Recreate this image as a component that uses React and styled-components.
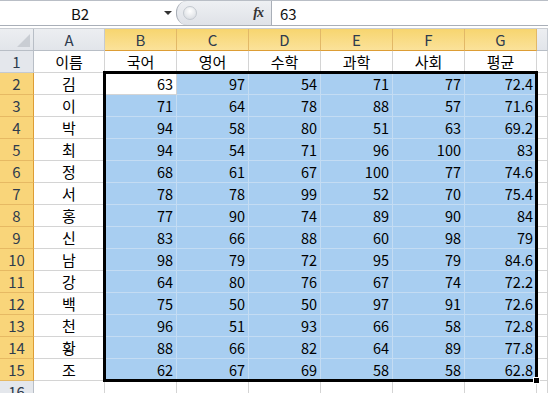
import styled, { createGlobalStyle } from "styled-components";

const GlobalStyle = createGlobalStyle`
  html, body {
    margin: 0;
    padding: 0;
    background: #ffffff;
    overflow: hidden;
  }
  body {
    font-family: "Noto Sans CJK KR", "Noto Sans", sans-serif;
  }
`;

const COLS = ["A", "B", "C", "D", "E", "F", "G"];

const rows = [
  ["이름", "국어", "영어", "수학", "과학", "사회", "평균"],
  ["김", 63, 97, 54, 71, 77, 72.4],
  ["이", 71, 64, 78, 88, 57, 71.6],
  ["박", 94, 58, 80, 51, 63, 69.2],
  ["최", 94, 54, 71, 96, 100, 83],
  ["정", 68, 61, 67, 100, 77, 74.6],
  ["서", 78, 78, 99, 52, 70, 75.4],
  ["홍", 77, 90, 74, 89, 90, 84],
  ["신", 83, 66, 88, 60, 98, 79],
  ["남", 98, 79, 72, 95, 79, 84.6],
  ["강", 64, 80, 76, 67, 74, 72.2],
  ["백", 75, 50, 50, 97, 91, 72.6],
  ["천", 96, 51, 93, 66, 58, 72.8],
  ["황", 88, 66, 82, 64, 89, 77.8],
  ["조", 62, 67, 69, 58, 58, 62.8],
];

const Window = styled.div`
  width: 548px;
  height: 393px;
  overflow: hidden;
  background: #ffffff;
  font-size: 14px;
`;

const FormulaBar = styled.div`
  display: flex;
  height: 24px;
  border-top: 1px solid #b9bec6;
  border-bottom: 1px solid #a9afb8;
  font-size: 15px;
`;

const NameBox = styled.div`
  position: relative;
  width: 176px;
  display: flex;
  align-items: center;
  justify-content: center;
  padding-right: 16px;
  box-sizing: border-box;
  background: #ffffff;
  color: #111;
`;

const DropArrow = styled.span`
  position: absolute;
  right: 4px;
  top: 10px;
  width: 0;
  height: 0;
  border-left: 4px solid transparent;
  border-right: 4px solid transparent;
  border-top: 4px solid #333;
`;

const Splitter = styled.div`
  width: 96px;
  display: flex;
  align-items: center;
  justify-content: space-between;
  padding: 0 8px 0 6px;
  box-sizing: border-box;
  background: linear-gradient(#eef0f3, #dfe2e7);
  border-left: 1px solid #a9afb8;
  border-right: 1px solid #a9afb8;
  border-radius: 11px 0 0 11px;
`;

const Knob = styled.span`
  width: 12px;
  height: 12px;
  border-radius: 50%;
  background: radial-gradient(circle at 50% 35%, #ffffff, #d3d7dd);
  border: 1px solid #c3c8cf;
`;

const Fx = styled.span`
  font-family: "Liberation Serif", serif;
  font-style: italic;
  font-weight: bold;
  font-size: 14px;
  color: #333;
  letter-spacing: -1px;
`;

const FormulaInput = styled.div`
  flex: 1;
  display: flex;
  align-items: center;
  padding-left: 8px;
  background: #ffffff;
  color: #111;
`;

const Spacer = styled.div`
  height: 2px;
  border-bottom: 1px solid #c9cdd3;
`;

const Sheet = styled.div`
  position: relative;
  display: grid;
  grid-template-columns: 34px 71px repeat(6, 72px) 1fr;
  grid-template-rows: 22px repeat(16, 22px);
`;

const Corner = styled.div`
  position: relative;
  background: linear-gradient(#eceef1, #e2e5ea);
  border-right: 1px solid #b8bec6;
  border-bottom: 1px solid #b8bec6;
  &::after {
    content: "";
    position: absolute;
    right: 3px;
    bottom: 3px;
    border-left: 13px solid transparent;
    border-bottom: 13px solid #c9cdd3;
  }
`;

const ColHead = styled.div`
  display: flex;
  align-items: center;
  justify-content: center;
  font-size: 15px;
  color: #2e3b4d;
  background: ${(p) =>
    p.$active
      ? "linear-gradient(#f7d56f, #fbe29a)"
      : "linear-gradient(#eceef1, #e2e5ea)"};
  border-right: 1px solid ${(p) => (p.$active ? "#e2b867" : "#c5cad1")};
  border-bottom: 1px solid ${(p) => (p.$active ? "#dd9d35" : "#b8bec6")};
`;

const RowHead = styled.div`
  display: flex;
  align-items: center;
  justify-content: center;
  font-size: 15px;
  color: #2e3b4d;
  background: ${(p) => (p.$active ? "#f9d57a" : "#e4e7ec")};
  border-right: 1px solid ${(p) => (p.$active ? "#dd9d35" : "#b8bec6")};
  border-bottom: 1px solid ${(p) => (p.$active ? "#e6b963" : "#c5cad1")};
`;

const Cell = styled.div`
  display: flex;
  align-items: center;
  justify-content: ${(p) => (p.$num ? "flex-end" : "center")};
  padding-right: ${(p) => (p.$num ? "3px" : "0")};
  font-size: ${(p) => (p.$num ? "14.5px" : "15px")};
  color: #000;
  background: ${(p) => (p.$sel ? "#a8cef1" : "#ffffff")};
  border-right: 1px solid ${(p) => (p.$sel ? "#c4dcf3" : "#d4d4d4")};
  border-bottom: 1px solid ${(p) => (p.$sel ? "#c4dcf3" : "#d4d4d4")};
  white-space: nowrap;
  overflow: hidden;
`;

const Selection = styled.div`
  position: absolute;
  grid-column: 3 / 9;
  grid-row: 3 / 17;
  top: -2px;
  left: -2px;
  right: -1px;
  bottom: -1px;
  border: 3px solid #000;
  pointer-events: none;
`;

const FillHandle = styled.div`
  position: absolute;
  right: -5px;
  bottom: -5px;
  width: 5px;
  height: 5px;
  background: #000;
  border: 1px solid #fff;
`;

export default function App() {
  return (
    <Window>
      <GlobalStyle />
      <FormulaBar>
        <NameBox>
          B2
          <DropArrow />
        </NameBox>
        <Splitter>
          <Knob />
          <Fx>fx</Fx>
        </Splitter>
        <FormulaInput>63</FormulaInput>
      </FormulaBar>
      <Spacer />
      <Sheet>
        <Corner />
        {COLS.map((c) => (
          <ColHead key={c} $active={c !== "A"}>
            {c}
          </ColHead>
        ))}
        <ColHead />
        {rows.map((r, ri) => (
          <Row key={ri} index={ri} data={r} />
        ))}
        <RowHead>16</RowHead>
        {COLS.map((c) => (
          <Cell key={c} />
        ))}
        <Cell />
        <Selection>
          <FillHandle />
        </Selection>
      </Sheet>
    </Window>
  );
}

function Row({ index, data }) {
  const header = index === 0;
  return (
    <>
      <RowHead $active={!header}>{index + 1}</RowHead>
      {data.map((v, ci) => {
        const sel = !header && ci > 0 && !(index === 1 && ci === 1);
        return (
          <Cell key={ci} $num={typeof v === "number"} $sel={sel}>
            {v}
          </Cell>
        );
      })}
      <Cell />
    </>
  );
}
